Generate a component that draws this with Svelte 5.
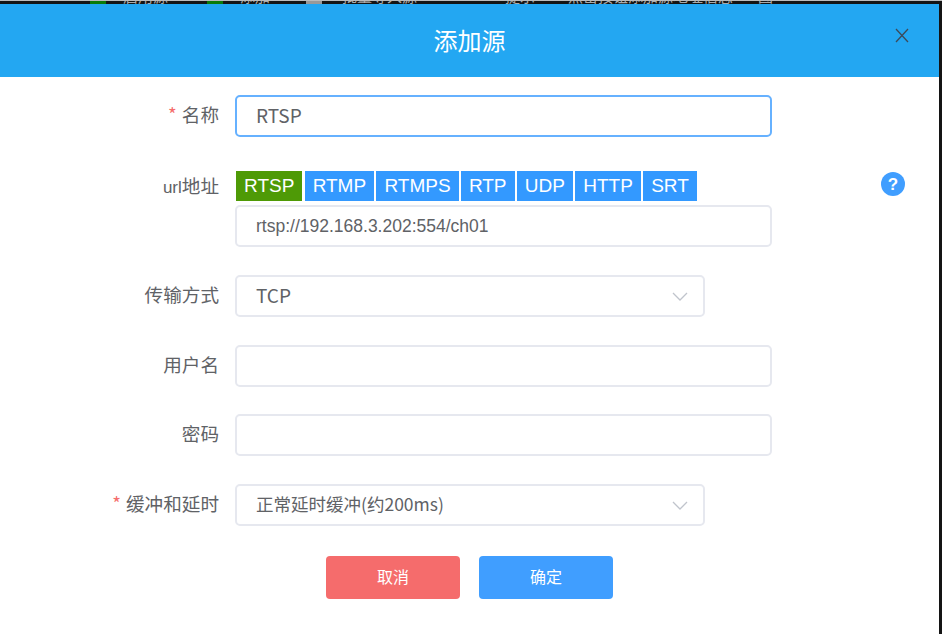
<script>
	const protocols = ['RTSP', 'RTMP', 'RTMPS', 'RTP', 'UDP', 'HTTP', 'SRT'];
	let active = 'RTSP';
</script>

<div class="page">
	<div class="behind">
		<span class="dot first"></span><span class="cut t1">启用源</span>
		<span class="dot d2"></span><span class="cut t1">添加</span>
		<span class="square"></span><span class="cut t3">批量导入源</span>
		<span class="cut t4">提示</span>
		<span class="cut t5">点击按钮添加源地址信息</span>
		<span class="cut t6">图</span>
	</div>
	<div class="dialog">
		<header>
			<h2>添加源</h2>
			<button class="close" aria-label="关闭">
				<svg width="14" height="15" viewBox="0 0 14 15"><path d="M1 1 13 14M13 1 1 14" /></svg>
			</button>
		</header>
		<form>
			<div class="row">
				<label class="req" for="name">名称</label>
				<div class="input focus wide-field latin" id="name">RTSP</div>
			</div>
			<div class="row url">
				<span class="label"><span class="ascii">url</span>地址</span>
				<div class="wide-field">
					<div class="tags">
						{#each protocols as p}
							<button type="button" class="tag" class:on={p === active} onclick={() => (active = p)}>{p}</button>
						{/each}
					</div>
					<div class="input small">rtsp://192.168.3.202:554/ch01</div>
				</div>
				<svg class="help" width="24" height="24" viewBox="0 0 24 24">
					<circle cx="12" cy="12" r="12" fill="#409eff" />
					<text x="12" y="18" text-anchor="middle">?</text>
				</svg>
			</div>
			<div class="row">
				<span class="label">传输方式</span>
				<div class="input select latin">
					<span class="val">TCP</span>
					<svg width="16" height="9" viewBox="0 0 16 9"><path d="M1 1 8 8 15 1" /></svg>
				</div>
			</div>
			<div class="row">
				<span class="label">用户名</span>
				<div class="input wide-field"></div>
			</div>
			<div class="row pw">
				<span class="label">密码</span>
				<div class="input wide-field"></div>
			</div>
			<div class="row">
				<span class="label req">缓冲和延时</span>
				<div class="input select">
					<span class="val">正常延时缓冲(约200ms)</span>
					<svg width="16" height="9" viewBox="0 0 16 9"><path d="M1 1 8 8 15 1" /></svg>
				</div>
			</div>
			<div class="actions">
				<button type="button" class="btn cancel">取消</button>
				<button type="button" class="btn ok">确定</button>
			</div>
		</form>
	</div>
</div>

<style>
	:global(body) {
		margin: 0;
		background: #fff;
	}
	.page {
		width: 942px;
		height: 634px;
		overflow: hidden;
		display: flex;
		flex-direction: column;
		font-family: "Noto Sans CJK SC", "Liberation Sans", sans-serif;
		color: #606266;
		background: #141414;
	}
	.behind {
		height: 4px;
		flex: none;
		box-sizing: border-box;
		border-top: 1px solid #bbb;
		display: flex;
		align-items: flex-end;
		overflow: hidden;
		font-size: 15px;
		line-height: 16px;
		color: #aaa;
	}
	.behind span {
		flex: none;
	}
	.dot,
	.square {
		width: 16px;
		height: 3px;
		background: #0a7a0a;
	}
	.square {
		margin-left: 36px;
		background: #999;
	}
	.first {
		margin-left: 90px;
	}
	.d2 {
		margin-left: 39px;
	}
	.t1 {
		margin-left: 17px;
	}
	.t3 {
		margin-left: 20px;
	}
	.t4 {
		margin-left: 88px;
	}
	.t5 {
		margin-left: 33px;
	}
	.t6 {
		margin-left: 25px;
	}
	.dialog {
		flex: 1;
		margin-right: 3px;
		background: #fff;
		display: flex;
		flex-direction: column;
	}
	header {
		height: 73px;
		flex: none;
		background: #23a7f2;
		display: flex;
		align-items: center;
		justify-content: center;
		position: relative;
	}
	h2 {
		margin: 0 0 2px;
		font-size: 24px;
		font-weight: 400;
		color: #fff;
	}
	.close {
		position: absolute;
		top: 24px;
		right: 30px;
		padding: 0;
		border: 0;
		background: none;
		line-height: 0;
	}
	.close path {
		stroke: #3c4a5a;
		stroke-width: 1.3;
		fill: none;
	}
	form {
		display: flex;
		flex-direction: column;
		gap: 28px;
		padding-top: 18px;
	}
	.row {
		display: flex;
		align-items: center;
		position: relative;
	}
	.row.url {
		align-items: flex-start;
		margin-top: 6px;
	}
	.row.pw {
		margin-top: -1px;
	}
	.row label,
	.label {
		width: 219px;
		flex: none;
		box-sizing: border-box;
		padding-bottom: 4px;
		text-align: right;
		font-size: 18.6px;
		line-height: 38px;
		color: #606266;
	}
	.url .label {
		padding-bottom: 0;
		line-height: 28px;
	}
	.ascii {
		font-family: "Liberation Sans", sans-serif;
		font-size: 17px;
	}
	.req::before {
		content: '*';
		color: #f56c6c;
		margin-right: 5px;
	}
	.input {
		height: 42px;
		box-sizing: border-box;
		border: 2px solid #e6e8ef;
		border-radius: 5px;
		padding: 0 19px;
		margin-left: 16px;
		font-size: 17.5px;
		line-height: 35px;
		color: #606266;
		background: #fff;
	}
	.wide-field {
		width: 537px;
		margin-left: 16px;
	}
	.focus {
		border-color: #66b1ff;
	}
	.latin {
		font-size: 19px;
	}
	.small {
		font-family: "Liberation Sans", sans-serif;
		font-size: 17.5px;
		line-height: 38px;
		margin: 0;
	}
	.tags {
		display: flex;
		gap: 2.3px;
		margin: 0 0 4px 1px;
	}
	.tag {
		height: 30px;
		padding: 0 8px;
		border: 0;
		background: #3399ff;
		color: #fff;
		font-family: "Liberation Sans", sans-serif;
		font-size: 19px;
	}
	.tag.on {
		background: #4e9a06;
	}
	.help {
		position: absolute;
		left: 881px;
		top: 1px;
	}
	.help text {
		fill: #fff;
		font-family: "Liberation Sans", sans-serif;
		font-size: 17px;
		font-weight: 700;
	}
	.select {
		width: 470px;
		display: flex;
		justify-content: space-between;
		align-items: center;
		padding-right: 15px;
	}
	.select path {
		stroke: #c0c4cc;
		stroke-width: 1.3;
		fill: none;
	}
	.val {
		margin-bottom: 3px;
	}
	.actions {
		display: flex;
		gap: 19px;
		padding-left: 326px;
		margin-top: 2px;
	}
	.btn {
		width: 134px;
		height: 43px;
		padding: 0 0 3px;
		border: 0;
		border-radius: 4px;
		color: #fff;
		font-family: inherit;
		font-size: 16px;
	}
	.cancel {
		background: #f56c6c;
	}
	.ok {
		background: #409eff;
	}
</style>
